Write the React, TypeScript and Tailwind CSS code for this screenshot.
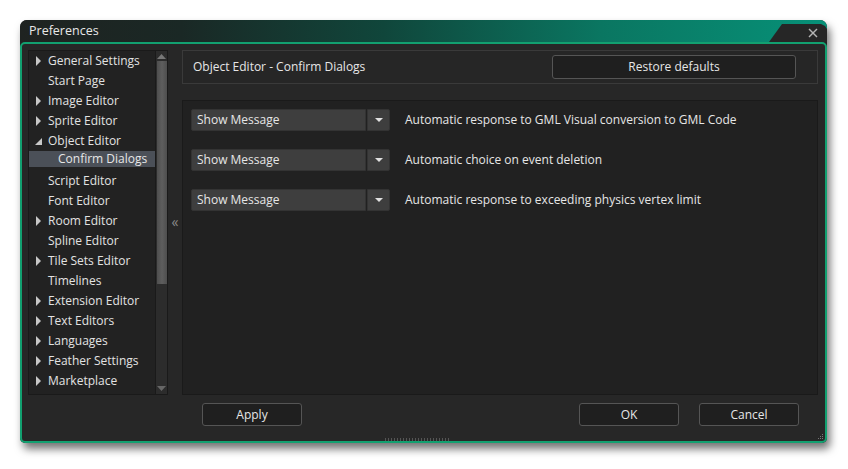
import React from "react";

const font = { fontFamily: '"Open Sans", "Noto Sans", sans-serif' };

type Item = { label: string; arrow?: "right" | "down" | "none"; indent?: boolean; selected?: boolean };

const items: Item[] = [
  { label: "General Settings", arrow: "right" },
  { label: "Start Page", arrow: "none" },
  { label: "Image Editor", arrow: "right" },
  { label: "Sprite Editor", arrow: "right" },
  { label: "Object Editor", arrow: "down" },
  { label: "Confirm Dialogs", indent: true, selected: true },
  { label: "Script Editor", arrow: "none" },
  { label: "Font Editor", arrow: "none" },
  { label: "Room Editor", arrow: "right" },
  { label: "Spline Editor", arrow: "none" },
  { label: "Tile Sets Editor", arrow: "right" },
  { label: "Timelines", arrow: "none" },
  { label: "Extension Editor", arrow: "right" },
  { label: "Text Editors", arrow: "right" },
  { label: "Languages", arrow: "right" },
  { label: "Feather Settings", arrow: "right" },
  { label: "Marketplace", arrow: "right" },
];

function TreeRow({ it }: { it: Item }) {
  if (it.indent) {
    return (
      <div className="h-[20px]">
        <div className="h-[16px] flex items-center bg-[#4b5058] text-[#e6e6e6] pl-[29px]">
          {it.label}
        </div>
      </div>
    );
  }
  return (
    <div className="h-[20px] flex items-center text-[#e2e2e2]">
      <div className="w-[19px] flex items-center justify-center">
        {it.arrow === "right" && (
          <svg width="6" height="10" viewBox="0 0 6 10">
            <polygon points="0,0 5,5 0,10" fill="#c8c8c8" />
          </svg>
        )}
        {it.arrow === "down" && (
          <svg width="7" height="7" viewBox="0 0 7 7">
            <polygon points="7,0 7,7 0,7" fill="#c8c8c8" />
          </svg>
        )}
      </div>
      <span>{it.label}</span>
    </div>
  );
}

function Dropdown() {
  return (
    <div className="flex h-[22px] w-[199px]">
      <div className="flex-1 bg-[#3e3e3e] rounded-l-[2px] flex items-center pl-[5px] text-[#e6e6e6] border border-[#333]">
        Show Message
      </div>
      <div className="w-[23px] ml-[1px] bg-[#3e3e3e] rounded-r-[2px] flex items-center justify-center border border-[#333]">
        <svg width="8" height="4" viewBox="0 0 8 4">
          <polygon points="0,0 8,0 4,4" fill="#e0e0e0" />
        </svg>
      </div>
    </div>
  );
}

function Btn({ label, className = "" }: { label: string; className?: string }) {
  return (
    <div
      className={`w-[100px] h-[23px] border border-[#555] rounded-[3px] bg-[#1f1f1f] flex items-center justify-center text-[#e6e6e6] ${className}`}
    >
      {label}
    </div>
  );
}

export default function App() {
  return (
    <div className="w-[848px] h-[469px] bg-white pt-[20px] pl-[20px] text-[12px]" style={font}>
      <div className="w-[807px] h-[423px] flex flex-col rounded-t-[7px] rounded-b-[5px] bg-[#232323] shadow-[3px_6px_8px_rgba(0,0,0,0.55)]">
        {/* Title bar */}
        <div className="relative h-[22px] rounded-t-[7px] bg-[linear-gradient(to_right,#1f2321_0%,#1a2825_20%,#10463b_45%,#0a7661_72%,#079178_100%)] flex items-center pl-[9px] text-[#e8e8e8] text-[12.5px]">
          <span>Preferences</span>
          <svg className="absolute right-0 top-[4px]" width="58" height="18" viewBox="0 0 58 18">
            <polygon points="0,18 13,0 52,0 56,2 58,5 58,18" fill="#262626" />
          </svg>
          <svg className="absolute right-[9px] top-[8px]" width="10" height="10" viewBox="0 0 10 10">
            <line x1="1" y1="1" x2="9" y2="9" stroke="#b4b4b4" strokeWidth="1.4" />
            <line x1="9" y1="1" x2="1" y2="9" stroke="#b4b4b4" strokeWidth="1.4" />
          </svg>
        </div>
        {/* Body */}
        <div className="relative flex-1 flex flex-col border-2 border-[#12a070] rounded-[5px] bg-[#272727] pt-[6px] pl-[6px] pr-[7px]">
          <div className="flex h-[345px]">
            {/* Tree */}
            <div className="w-[140px] flex border border-[#1a1a1a] bg-[#222222]">
              <div className="flex-1 flex flex-col">
                {items.map((it) => (
                  <TreeRow key={it.label} it={it} />
                ))}
              </div>
              <div className="w-[12px] bg-[#2c2c2c] border-l border-[#1a1a1a] flex flex-col items-center">
                <svg className="mt-[3px]" width="9" height="5" viewBox="0 0 9 5">
                  <polygon points="0,5 4.5,0 9,5" fill="#777" />
                </svg>
                <div className="w-[10px] h-[223px] mt-[2px] bg-[linear-gradient(to_right,#4e4e4e,#5e5e5e,#4e4e4e)]" />
                <div className="flex-1" />
                <svg className="mb-[3px]" width="9" height="5" viewBox="0 0 9 5">
                  <polygon points="0,0 9,0 4.5,5" fill="#666" />
                </svg>
              </div>
            </div>
            {/* Splitter */}
            <div className="w-[14px] flex items-center justify-center text-[#8a8a8a] text-[14px] leading-none pb-[2px]">
              «
            </div>
            {/* Right */}
            <div className="flex-1 flex flex-col">
              <div className="h-[34px] border border-[#3a3a3a] bg-[#262626] flex items-center pl-[10px] pr-[21px] text-[#e6e6e6]">
                <span className="flex-1">Object Editor - Confirm Dialogs</span>
                <div className="w-[244px] h-[24px] border border-[#555] rounded-[3px] bg-[#1f1f1f] flex items-center justify-center text-[#e6e6e6]">
                  Restore defaults
                </div>
              </div>
              <div className="mt-[16px] flex-1 border border-[#1a1a1a] bg-[#212121] pt-[8px] pl-[8px] flex flex-col gap-[18px]">
                {[
                  "Automatic response to GML Visual conversion to GML Code",
                  "Automatic choice on event deletion",
                  "Automatic response to exceeding physics vertex limit",
                ].map((t) => (
                  <div key={t} className="flex items-center">
                    <Dropdown />
                    <span className="ml-[15px] text-[#e6e6e6]">{t}</span>
                  </div>
                ))}
              </div>
            </div>
          </div>
          <div className="flex items-center mt-[8px]">
            <Btn label="Apply" className="ml-[174px]" />
            <div className="flex-1" />
            <Btn label="OK" />
            <Btn label="Cancel" className="ml-[20px] mr-[19px]" />
          </div>
          {/* bottom grips */}
          <div className="absolute bottom-[0px] left-[363px] w-[66px] h-[3px] bg-[repeating-linear-gradient(to_right,#555_0px,#555_1px,transparent_1px,transparent_3px)]" />
          <svg className="absolute right-[1px] bottom-[1px]" width="8" height="8" viewBox="0 0 8 8">
            <rect x="6" y="2" width="1" height="1" fill="#777" />
            <rect x="4" y="4" width="1" height="1" fill="#777" />
            <rect x="6" y="4" width="1" height="1" fill="#777" />
            <rect x="2" y="6" width="1" height="1" fill="#777" />
            <rect x="4" y="6" width="1" height="1" fill="#777" />
            <rect x="6" y="6" width="1" height="1" fill="#777" />
          </svg>
        </div>
      </div>
    </div>
  );
}
